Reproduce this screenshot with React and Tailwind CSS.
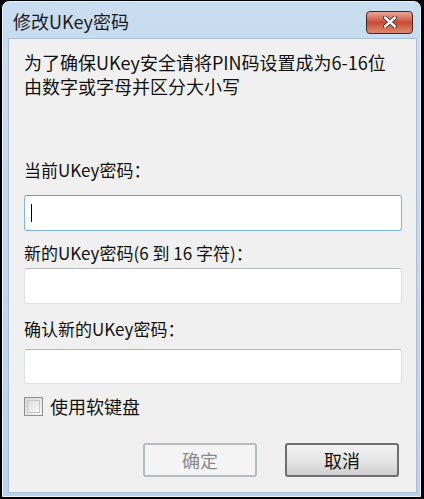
import React from "react";

const font = { fontFamily: '"Noto Sans CJK SC", "Noto Sans", sans-serif' };

function Field({ focused, h = "h-[36px]" }) {
  return (
    <div
      className={
        h +
        " w-full rounded-[3px] border bg-white flex items-center pl-[6px] " +
        (focused
          ? "border-[#7eb4ea] border-t-[#569de5]"
          : "border-[#dde3ea] border-t-[#b5b9c0]")
      }
    >
      {focused && <div className="w-[1px] h-[18px] bg-black" />}
    </div>
  );
}

export default function App() {
  return (
    <div className="w-[424px] h-[499px] bg-black pt-[1px] pl-[2px] pr-[3px] pb-[2px]" style={font}>
      <div className="w-full h-full rounded-t-[7px] bg-gradient-to-b from-[#c9ddf0] to-[#b9d2ea] border border-[#e8f1fa] flex flex-col">
        <div className="h-[36px] flex items-center justify-between pl-[10px] pr-[7px] shrink-0">
          <span className="text-[18px] text-[#1b1b1b] leading-none mt-[2px]">修改UKey密码</span>
          <div className="w-[47px] h-[23px] mt-[4px] rounded-[4px] border border-[#3d2a26] bg-gradient-to-b from-[#e9a99b] via-[#c94a36] to-[#da8a6f] flex items-center justify-center">
            <svg width="16" height="12" viewBox="0 0 16 12">
              <path d="M3 1.5 L13 10.5 M13 1.5 L3 10.5" stroke="#3a2220" strokeWidth="4" strokeLinecap="round" />
              <path d="M3 1.5 L13 10.5 M13 1.5 L3 10.5" stroke="#ffffff" strokeWidth="2.4" strokeLinecap="round" />
            </svg>
          </div>
        </div>
        <div className="flex-1 ml-[5px] mr-[3px] mb-[3px] bg-[#f0f0f0] border border-[#a9bfd6] pl-[15px] pr-[14px] pt-[11px] flex flex-col">
          <div className="text-[18px] leading-[24px] text-[#111]">
            <div>为了确保UKey安全请将PIN码设置成为6-16位</div>
            <div>由数字或字母并区分大小写</div>
          </div>
          <div className="mt-[61px] text-[17px] leading-[22px] text-[#111]">当前UKey密码：</div>
          <div className="mt-[14px]"><Field focused /></div>
          <div className="mt-[11px] text-[17px] leading-[22px] text-[#111]">新的UKey密码(6 到 16 字符)：</div>
          <div className="mt-[4px]"><Field /></div>
          <div className="mt-[14px] text-[17px] leading-[22px] text-[#111]">确认新的UKey密码：</div>
          <div className="mt-[9px]"><Field h="h-[35px]" /></div>
          <div className="mt-[11px] flex items-center h-[22px]">
            <div className="w-[19px] h-[19px] border border-[#8e8f8f] bg-gradient-to-br from-[#d8d8d8] to-[#f6f6f6] p-[2px]">
              <div className="w-full h-full border border-[#c6c6c6] bg-gradient-to-br from-[#dcdcdc] to-[#f9f9f9]" />
            </div>
            <span className="ml-[7px] text-[18px] leading-[22px] text-[#111]">使用软键盘</span>
          </div>
          <div className="mt-[26px] flex justify-end gap-[28px] pr-[3px]">
            <div className="w-[114px] h-[34px] rounded-[3px] border-2 border-[#b8bcbf] bg-[#f4f4f4] flex items-center justify-center text-[18px] text-[#8a8a8a]">确定</div>
            <div className="w-[114px] h-[34px] rounded-[3px] border-2 border-[#6f6f6f] bg-gradient-to-b from-[#f2f2f2] via-[#e6e6e6] to-[#cfcfcf] flex items-center justify-center text-[18px] text-[#111]">取消</div>
          </div>
        </div>
      </div>
    </div>
  );
}
